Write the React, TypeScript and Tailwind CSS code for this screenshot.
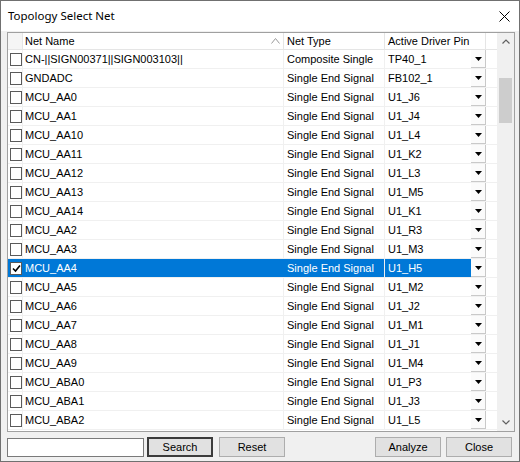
import React from 'react'

const rows: [string, string, string][] = [
  ['CN-||SIGN00371||SIGN003103||', 'Composite Single', 'TP40_1'],
  ['GNDADC', 'Single End Signal', 'FB102_1'],
  ['MCU_AA0', 'Single End Signal', 'U1_J6'],
  ['MCU_AA1', 'Single End Signal', 'U1_J4'],
  ['MCU_AA10', 'Single End Signal', 'U1_L4'],
  ['MCU_AA11', 'Single End Signal', 'U1_K2'],
  ['MCU_AA12', 'Single End Signal', 'U1_L3'],
  ['MCU_AA13', 'Single End Signal', 'U1_M5'],
  ['MCU_AA14', 'Single End Signal', 'U1_K1'],
  ['MCU_AA2', 'Single End Signal', 'U1_R3'],
  ['MCU_AA3', 'Single End Signal', 'U1_M3'],
  ['MCU_AA4', 'Single End Signal', 'U1_H5'],
  ['MCU_AA5', 'Single End Signal', 'U1_M2'],
  ['MCU_AA6', 'Single End Signal', 'U1_J2'],
  ['MCU_AA7', 'Single End Signal', 'U1_M1'],
  ['MCU_AA8', 'Single End Signal', 'U1_J1'],
  ['MCU_AA9', 'Single End Signal', 'U1_M4'],
  ['MCU_ABA0', 'Single End Signal', 'U1_P3'],
  ['MCU_ABA1', 'Single End Signal', 'U1_J3'],
  ['MCU_ABA2', 'Single End Signal', 'U1_L5'],
]

const SELECTED = 11

function CheckBox({ checked }: { checked: boolean }) {
  return (
    <div className="w-[12px] h-[13px] border border-[#5a5a5a] bg-white flex items-center justify-center">
      {checked && (
        <svg width="9" height="9" viewBox="0 0 9 9">
          <path d="M1 4.5 L3.5 7 L8 1.5" stroke="#000" strokeWidth="1.6" fill="none" />
        </svg>
      )}
    </div>
  )
}

function DropArrow() {
  return (
    <div className="w-[15px] h-[18px] bg-[#fbfbfb] border-r border-b border-[#c9c9c9] flex items-center justify-center">
      <svg width="7" height="4" viewBox="0 0 7 4">
        <path d="M0 0 H7 L3.5 4 Z" fill="#000" />
      </svg>
    </div>
  )
}

function Btn({ label, main }: { label: string; main?: boolean }) {
  return (
    <button
      className={
        main
          ? 'h-[20px] w-[66px] bg-[#e1e1e1] border-2 border-[#3c3c3c] text-[11px] text-black'
          : 'h-[20px] w-[66px] bg-[#e1e1e1] border border-[#adadad] text-[11px] text-black'
      }
    >
      {label}
    </button>
  )
}

export default function App() {
  return (
    <div className="w-[520px] h-[462px] bg-[#f0f0f0] border border-[#707070] flex flex-col font-['Liberation_Sans',Arial,sans-serif] text-[11px] text-black select-none">
      <div className="h-[30px] bg-white flex items-center justify-between pl-[7px] pr-[9px] shrink-0">
        <span className="font-['Noto_Sans',sans-serif] text-[11.5px]">Topology Select Net</span>
        <svg width="11" height="11" viewBox="0 0 11 11">
          <path d="M0.5 0.5 L10.5 10.5 M10.5 0.5 L0.5 10.5" stroke="#000" strokeWidth="1" />
        </svg>
      </div>

      <div className="ml-[6px] mt-[1px] w-[508px] h-[400px] border border-[#a0a0a0] bg-white flex">
        <div className="flex-1 flex flex-col">
          <div className="flex h-[17px] border-b border-[#e5e5e5] shrink-0">
            <div className="w-[15px] bg-[#f5f5f5] border-r border-[#e5e5e5]" />
            <div className="w-[261px] border-r border-[#e5e5e5] flex items-center justify-between pl-[2px] pr-[3px]">
              <span>Net Name</span>
              <svg width="9" height="6" viewBox="0 0 9 6">
                <path d="M0.5 5.5 L4.5 0.5 L8.5 5.5" stroke="#9a9a9a" fill="none" strokeWidth="1" />
              </svg>
            </div>
            <div className="w-[101px] border-r border-[#e5e5e5] flex items-center pl-[3px]">Net Type</div>
            <div className="w-[101px] border-r border-[#e5e5e5] flex items-center pl-[3px]">Active Driver Pin</div>
          </div>
          {rows.map(([name, type, pin], i) => {
            const sel = i === SELECTED
            return (
              <div key={name} className="flex h-[19px] border-b border-[#f0f0f0]">
                <div
                  className={
                    sel
                      ? 'w-[15px] bg-[#0078d7] border-r border-[#0078d7] flex items-center pl-[2px]'
                      : 'w-[15px] border-r border-[#f0f0f0] flex items-center pl-[2px]'
                  }
                >
                  <CheckBox checked={sel} />
                </div>
                <div
                  className={
                    sel
                      ? 'w-[261px] bg-[#0078d7] text-white border-r border-[#0078d7] flex items-center pl-[2px]'
                      : 'w-[261px] border-r border-[#f0f0f0] flex items-center pl-[2px]'
                  }
                >
                  {name}
                </div>
                <div
                  className={
                    sel
                      ? 'w-[101px] bg-[#0078d7] text-white border-r border-[#f0f0f0] flex items-center pl-[3px]'
                      : 'w-[101px] border-r border-[#f0f0f0] flex items-center pl-[3px]'
                  }
                >
                  {type}
                </div>
                <div className="w-[101px] flex items-center">
                  <div
                    className={
                      sel
                        ? 'flex-1 h-full bg-[#0078d7] text-white flex items-center pl-[3px]'
                        : 'flex-1 h-full flex items-center pl-[3px]'
                    }
                  >
                    {pin}
                  </div>
                  <DropArrow />
                </div>
              </div>
            )
          })}
        </div>

        <div className="w-[17px] bg-[#f0f0f0] flex flex-col shrink-0">
          <div className="h-[17px] flex items-center justify-center">
            <svg width="8" height="5" viewBox="0 0 8 5">
              <path d="M0.5 4.5 L4 1 L7.5 4.5" stroke="#606060" fill="none" strokeWidth="1.2" />
            </svg>
          </div>
          <div className="flex-1 px-[2px] pt-[28px]">
            <div className="h-[45px] bg-[#cdcdcd]" />
          </div>
          <div className="h-[17px] flex items-center justify-center">
            <svg width="8" height="5" viewBox="0 0 8 5">
              <path d="M0.5 0.5 L4 4 L7.5 0.5" stroke="#606060" fill="none" strokeWidth="1.2" />
            </svg>
          </div>
        </div>
      </div>

      <div className="flex items-center ml-[6px] mt-[5px] pr-[7px]">
        <div className="w-[137px] h-[19px] bg-white border border-[#7a7a7a]" />
        <div className="ml-[3px]">
          <Btn label="Search" main />
        </div>
        <div className="ml-[6px]">
          <Btn label="Reset" />
        </div>
        <div className="ml-auto">
          <Btn label="Analyze" />
        </div>
        <div className="ml-[5px]">
          <Btn label="Close" />
        </div>
      </div>
    </div>
  )
}
